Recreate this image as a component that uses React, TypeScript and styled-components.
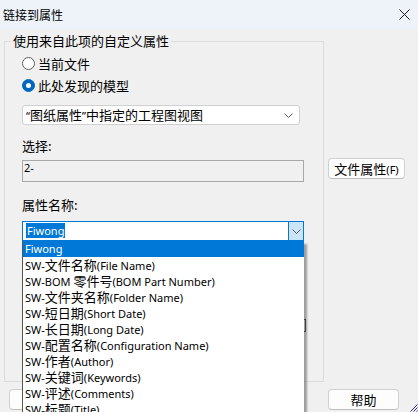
import React from "react";
import styled, { createGlobalStyle } from "styled-components";

const GlobalStyle = createGlobalStyle`
  html, body {
    margin: 0;
    padding: 0;
    background: #f0f0f0;
  }
  body {
    font-family: "Noto Sans", "Noto Sans CJK SC", sans-serif;
    font-size: 11px;
    color: #000;
  }
`;

const Window = styled.div`
  position: relative;
  width: 418px;
  height: 412px;
  overflow: hidden;
  display: flex;
  flex-direction: column;
  background: #f0f0f0;
`;

const TitleBar = styled.div`
  height: 29px;
  flex: none;
  display: flex;
  align-items: center;
  justify-content: space-between;
  padding: 0 8px 0 3px;
  background: #eef3fa;
  font-family: "Noto Sans CJK SC", sans-serif;
  font-size: 12px;
`;

const Main = styled.div`
  display: flex;
  padding: 3px 0 0 4px;
`;

const Group = styled.fieldset`
  position: relative;
  box-sizing: border-box;
  width: 320px;
  height: 350px;
  margin: 0;
  padding: 0 0 0 17px;
  border: 1px solid #dcdcdc;
  min-width: 0;
`;

const Legend = styled.legend`
  margin-left: -11px;
  padding: 0 2px;
  line-height: 18px;
  font-family: "Noto Sans CJK SC", sans-serif;
  font-size: 13px;
`;

const RadioList = styled.div`
  margin-top: 2px;
  display: flex;
  flex-direction: column;
`;

const RadioRow = styled.label`
  display: flex;
  align-items: center;
  gap: 3px;
  height: 22px;
`;

const RadioDot = styled.span<{ $on?: boolean }>`
  box-sizing: border-box;
  width: 13px;
  height: 13px;
  border-radius: 50%;
  display: flex;
  align-items: center;
  justify-content: center;
  background: ${(p) => (p.$on ? "#0067c0" : "#ffffff")};
  border: 1px solid ${(p) => (p.$on ? "#0067c0" : "#5d5d5d")};
  &::after {
    content: "";
    display: ${(p) => (p.$on ? "block" : "none")};
    width: 5px;
    height: 5px;
    border-radius: 50%;
    background: #ffffff;
  }
`;

const Cjk = styled.span`
  font-family: "Noto Sans CJK SC", sans-serif;
  font-size: 13px;
`;

const Latin = styled.span`
  font-family: "Noto Sans", sans-serif;
  font-size: 11px;
`;

const Combo = styled.div<{ $focus?: boolean }>`
  box-sizing: border-box;
  display: flex;
  align-items: center;
  height: 20px;
  width: ${(p) => (p.$focus ? "282px" : "278px")};
  background: #ffffff;
  border: 1px solid ${(p) => (p.$focus ? "#0078d7" : "#d0d0d0")};
  border-radius: ${(p) => (p.$focus ? "0" : "3px")};
  white-space: nowrap;
`;

const ComboText = styled.div`
  flex: 1;
  padding-left: 3px;
  line-height: 18px;
`;

const Selected = styled.span`
  background: #0078d7;
  color: #ffffff;
  padding: 0 1px;
`;

const ComboButton = styled.div<{ $focus?: boolean }>`
  box-sizing: border-box;
  width: ${(p) => (p.$focus ? "15px" : "22px")};
  height: 100%;
  display: flex;
  align-items: center;
  justify-content: center;
  background: ${(p) => (p.$focus ? "#cce4f7" : "transparent")};
  border-left: ${(p) => (p.$focus ? "1px solid #0078d7" : "none")};
`;

const FieldLabel = styled.div<{ $top: number }>`
  margin-top: ${(p) => p.$top}px;
  line-height: 18px;
  font-family: "Noto Sans CJK SC", sans-serif;
  font-size: 13px;
`;

const ReadBox = styled.div`
  box-sizing: border-box;
  margin-top: 5px;
  width: 282px;
  height: 22px;
  border: 1px solid #a8a8a8;
  background: #f0f0f0;
  padding-left: 1px;
  line-height: 14px;
`;

const ComboWrap = styled.div`
  position: relative;
  margin-top: 7px;
  width: 282px;
`;

const DropList = styled.ul`
  position: absolute;
  z-index: 2;
  top: 100%;
  left: 0;
  box-sizing: border-box;
  width: 282px;
  margin: 0;
  padding: 0;
  list-style: none;
  background: #ffffff;
  border-left: 1px solid #555555;
  box-shadow: 3px 3px 2px rgba(0, 0, 0, 0.35);
`;

const DropItem = styled.li<{ $active?: boolean }>`
  height: 16px;
  line-height: 16px;
  padding-left: 2px;
  white-space: nowrap;
  background: ${(p) => (p.$active ? "#0078d7" : "transparent")};
  color: ${(p) => (p.$active ? "#ffffff" : "#000000")};
`;

const HiddenField = styled.div`
  margin-top: 78px;
  width: 284px;
  height: 13px;
  display: flex;
  justify-content: flex-end;
`;

const HiddenEdge = styled.span`
  box-sizing: border-box;
  width: 3px;
  height: 13px;
  border: 1px solid #606060;
  border-left: none;
`;

const Side = styled.div`
  padding: 126px 0 0 4px;
`;

const Button = styled.button<{ $w: number }>`
  box-sizing: border-box;
  width: ${(p) => p.$w}px;
  height: 21px;
  padding: 0;
  background: #fdfdfd;
  border: 1px solid #d0d0d0;
  border-bottom-color: #bdbdbd;
  border-radius: 4px;
  font-family: "Noto Sans CJK SC", sans-serif;
  font-size: 13px;
  line-height: 17px;
  color: #000;
`;

const Footer = styled.div`
  display: flex;
  justify-content: space-between;
  padding: 7px 19px 0 9px;
`;

const Grip = styled.svg`
  position: absolute;
  right: 0;
  bottom: 0;
`;

const cjkRun = /([\u2e80-\u9fff\uff00-\uffef]+)/;

const Mixed = ({ text }: { text: string }) => (
  <>
    {text.split(cjkRun).map((part, i) =>
      part === "" ? null : cjkRun.test(part) ? (
        <Cjk key={i}>{part}</Cjk>
      ) : (
        <Latin key={i}>{part}</Latin>
      )
    )}
  </>
);

const Chevron = () => (
  <svg width="9" height="5" viewBox="0 0 9 5">
    <path d="M0.5 0.5 L4.5 4.5 L8.5 0.5" fill="none" stroke="#5a5a5a" strokeWidth="1" />
  </svg>
);

const properties = [
  "SW-文件名称(File Name)",
  "SW-BOM 零件号(BOM Part Number)",
  "SW-文件夹名称(Folder Name)",
  "SW-短日期(Short Date)",
  "SW-长日期(Long Date)",
  "SW-配置名称(Configuration Name)",
  "SW-作者(Author)",
  "SW-关键词(Keywords)",
  "SW-评述(Comments)",
  "SW-标题(Title)",
];

const App = () => (
  <Window>
    <GlobalStyle />
    <TitleBar>
      <span>链接到属性</span>
      <svg width="11" height="11" viewBox="0 0 11 11">
        <path d="M0.5 0.5 L10.5 10.5 M10.5 0.5 L0.5 10.5" stroke="#1a1a1a" strokeWidth="1" />
      </svg>
    </TitleBar>
    <Main>
      <Group>
        <Legend>使用来自此项的自定义属性</Legend>
        <RadioList>
          <RadioRow>
            <RadioDot />
            <Cjk>当前文件</Cjk>
          </RadioRow>
          <RadioRow>
            <RadioDot $on />
            <Cjk>此处发现的模型</Cjk>
          </RadioRow>
        </RadioList>
        <Combo style={{ marginTop: 9 }}>
          <ComboText>
            <Mixed text="“图纸属性”中指定的工程图视图" />
          </ComboText>
          <ComboButton>
            <Chevron />
          </ComboButton>
        </Combo>
        <FieldLabel $top={12}>选择:</FieldLabel>
        <ReadBox>
          <Latin>2-</Latin>
        </ReadBox>
        <FieldLabel $top={14}>属性名称:</FieldLabel>
        <ComboWrap>
          <Combo $focus>
            <ComboText>
              <Selected>Fiwong</Selected>
            </ComboText>
            <ComboButton $focus>
              <Chevron />
            </ComboButton>
          </Combo>
          <DropList>
            <DropItem $active>Fiwong</DropItem>
            {properties.map((p) => (
              <DropItem key={p}>
                <Mixed text={p} />
              </DropItem>
            ))}
          </DropList>
        </ComboWrap>
        <HiddenField>
          <HiddenEdge />
        </HiddenField>
      </Group>
      <Side>
        <Button $w={77}>
          <Mixed text="文件属性(F)" />
        </Button>
      </Side>
    </Main>
    <Footer>
      <Button $w={80} />
      <Button $w={71}>帮助</Button>
    </Footer>
    <Grip width="8" height="8" viewBox="0 0 8 8">
      <path d="M7.5 0.5 L0.5 7.5 M7.5 3.5 L3.5 7.5 M7.5 6.5 L6.5 7.5" stroke="#2a2a8a" strokeWidth="1" />
    </Grip>
  </Window>
);

export default App;
